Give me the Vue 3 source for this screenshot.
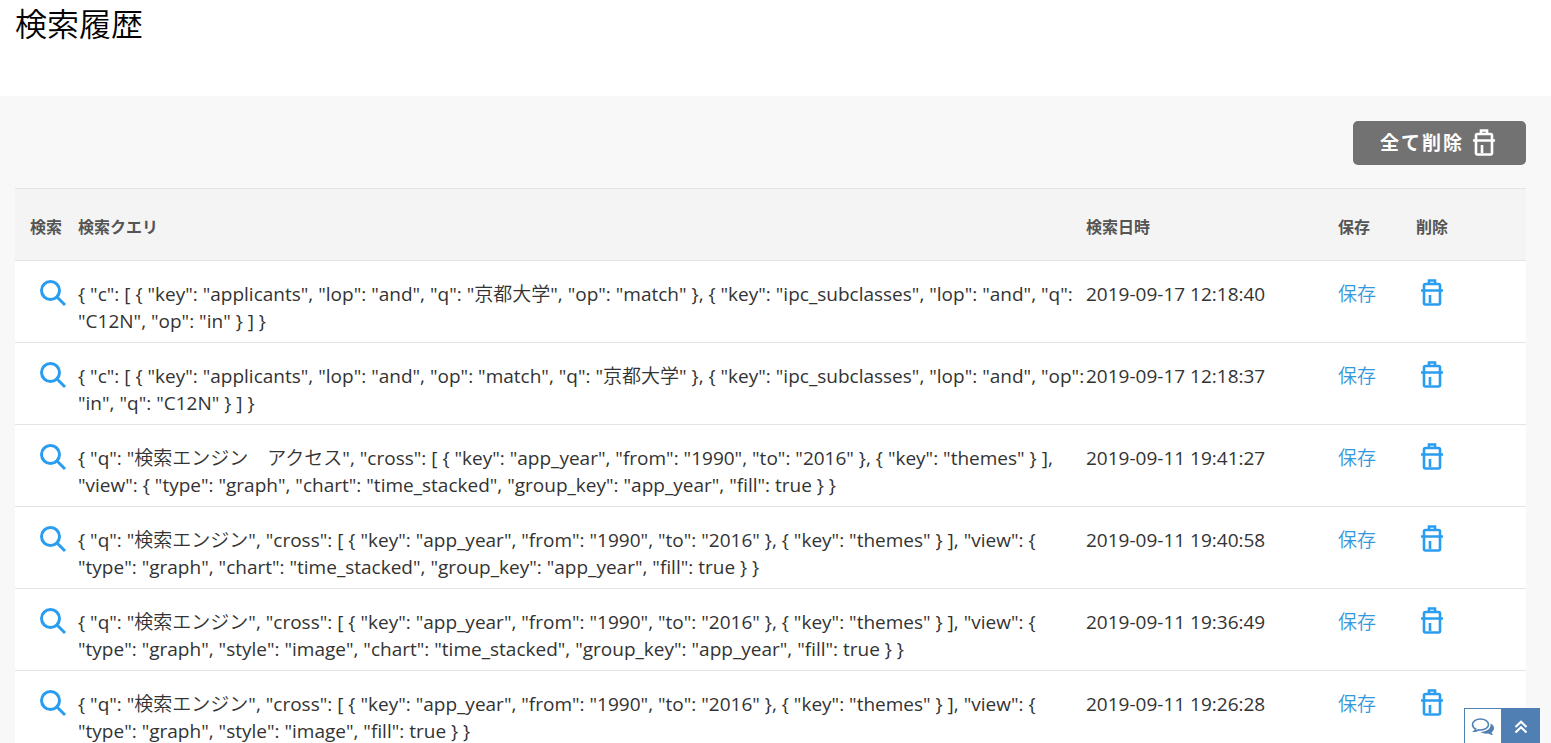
<script setup>
const rows = [
  { query: '{ "c": [ { "key": "applicants", "lop": "and", "q": "京都大学", "op": "match" }, { "key": "ipc_subclasses", "lop": "and", "q": "C12N", "op": "in" } ] }', date: '2019-09-17 12:18:40' },
  { query: '{ "c": [ { "key": "applicants", "lop": "and", "op": "match", "q": "京都大学" }, { "key": "ipc_subclasses", "lop": "and", "op": "in", "q": "C12N" } ] }', date: '2019-09-17 12:18:37' },
  { query: '{ "q": "検索エンジン　アクセス", "cross": [ { "key": "app_year", "from": "1990", "to": "2016" }, { "key": "themes" } ], "view": { "type": "graph", "chart": "time_stacked", "group_key": "app_year", "fill": true } }', date: '2019-09-11 19:41:27' },
  { query: '{ "q": "検索エンジン", "cross": [ { "key": "app_year", "from": "1990", "to": "2016" }, { "key": "themes" } ], "view": { "type": "graph", "chart": "time_stacked", "group_key": "app_year", "fill": true } }', date: '2019-09-11 19:40:58' },
  { query: '{ "q": "検索エンジン", "cross": [ { "key": "app_year", "from": "1990", "to": "2016" }, { "key": "themes" } ], "view": { "type": "graph", "style": "image", "chart": "time_stacked", "group_key": "app_year", "fill": true } }', date: '2019-09-11 19:36:49' },
  { query: '{ "q": "検索エンジン", "cross": [ { "key": "app_year", "from": "1990", "to": "2016" }, { "key": "themes" } ], "view": { "type": "graph", "style": "image", "fill": true } }', date: '2019-09-11 19:26:28' },
]
</script>

<template>
  <div class="page">
    <header class="head">
      <h1>検索履歴</h1>
    </header>
    <main class="body">
      <div class="toolbar">
        <button type="button" class="clear">
          <span>全て削除</span>
          <svg class="trash" viewBox="0 0 24 28" aria-hidden="true">
            <path d="M9 5V1.500h6V5M4 11V6.500q0-1.500 1.500-1.500h13q1.500 0 1.500 1.500V11M1 11.500h22M4 11.500V24q0 1.500 1.500 1.500h13q1.500 0 1.500-1.500V11.500M10 16v8" />
          </svg>
        </button>
      </div>
      <table class="history">
        <colgroup>
          <col class="c-search" />
          <col />
          <col class="c-date" />
          <col class="c-save" />
          <col class="c-delete" />
        </colgroup>
        <thead>
          <tr>
            <th scope="col">検索</th>
            <th scope="col">検索クエリ</th>
            <th scope="col">検索日時</th>
            <th scope="col">保存</th>
            <th scope="col">削除</th>
          </tr>
        </thead>
        <tbody>
          <tr v-for="row in rows" :key="row.date">
            <td class="search">
              <a href="#" aria-label="検索">
                <svg class="lens" viewBox="0 0 28 28" aria-hidden="true">
                  <circle cx="11.500" cy="11.500" r="9" />
                  <path d="M18 18l8 8" />
                </svg>
              </a>
            </td>
            <td>{{ row.query }}</td>
            <td>{{ row.date }}</td>
            <td><a href="#">保存</a></td>
            <td class="delete">
              <button type="button" class="icon" aria-label="削除">
                <svg class="trash" viewBox="0 0 24 28" aria-hidden="true">
                  <path d="M9 5V1.500h6V5M4 11V6.500q0-1.500 1.500-1.500h13q1.500 0 1.500 1.500V11M1 11.500h22M4 11.500V24q0 1.500 1.500 1.500h13q1.500 0 1.500-1.500V11.500M10 16v8" />
                </svg>
              </button>
            </td>
          </tr>
        </tbody>
      </table>
    </main>
    <div class="float">
      <button type="button" class="chat" aria-label="チャット">
        <svg viewBox="0 0 24 20" aria-hidden="true">
          <path class="fill" d="M19.500 6.500c2.300 1.100 3.500 2.800 3.500 4.700 0 1.700-.9 3.200-2.500 4.200.3 1 .9 1.800 1.800 2.400-1.900.2-3.500-.3-4.800-1.300-2.800.4-5.800-.1-7.800-1.500 5.600-.2 10.800-3.200 9.800-8.500z" />
          <path class="line" d="M9.500 2C5 2 1.500 4.400 1.500 7.500c0 1.900 1.200 3.500 3.200 4.500-.2.900-.7 1.600-1.500 2.300 1.700 0 3.100-.5 4.200-1.500.7.100 1.400.2 2.100.2 4.500 0 8-2.400 8-5.500S14 2 9.500 2z" />
        </svg>
      </button>
      <button type="button" class="top" aria-label="トップへ戻る">
        <svg viewBox="0 0 14 14" aria-hidden="true">
          <path d="M1.500 7L7 1.700 12.500 7M1.500 12.500L7 7.200l5.500 5.300" />
        </svg>
      </button>
    </div>
  </div>
</template>

<style>
html {
  height: 100%;
  overflow: hidden;
}
body {
  height: 100%;
  margin: 0;
  overflow: auto;
  scrollbar-width: none;
  background: #f8f8f8;
}
</style>

<style scoped>
.page {
  font-family: "Open Sans", "Noto Sans CJK JP DemiLight", "Noto Sans CJK JP", sans-serif;
  font-size: 19px;
  line-height: 27px;
  color: #333;
}
.head {
  background: #fff;
  padding: 0 15px 48px;
}
h1 {
  margin: 0;
  font-size: 32px;
  line-height: 48px;
  font-weight: 400;
  color: #000;
}
.body {
  padding: 25px 25px 40px 15px;
}
.toolbar {
  display: flex;
  justify-content: flex-end;
  margin-bottom: 23px;
}
button {
  font: inherit;
  border: 0;
  padding: 0;
  cursor: pointer;
}
.clear {
  display: flex;
  align-items: center;
  gap: 8px;
  height: 44px;
  padding: 0 30px 0 27px;
  border-radius: 5px;
  background: #727272;
  color: #fff;
  font-family: "Open Sans", "Noto Sans CJK JP", sans-serif;
  font-size: 19px;
  font-weight: 700;
  letter-spacing: 2px;
}
svg {
  display: block;
  fill: none;
  stroke: currentColor;
  stroke-width: 3;
}
.trash {
  width: 24px;
  height: 28px;
  stroke-width: 2.6;
}
.history {
  width: 100%;
  table-layout: fixed;
  border-collapse: collapse;
  background: #fff;
}
.c-search {
  width: 63px;
}
.c-date {
  width: 252px;
}
.c-save {
  width: 78px;
}
.c-delete {
  width: 110px;
}
tr {
  border-top: 1px solid #e3e3e3;
}
th {
  height: 72px;
  padding: 6px 0 0;
  box-sizing: border-box;
  background: #f4f4f4;
  color: #555;
  font-family: "Open Sans", "Noto Sans CJK JP", sans-serif;
  font-size: 16px;
  font-weight: 700;
  text-align: left;
  white-space: nowrap;
}
th:first-child {
  padding-left: 15px;
}
td {
  padding: 20px 0 7px;
  vertical-align: top;
}
a {
  color: #3498db;
  text-decoration: none;
}
.search {
  padding: 18px 0 0 24px;
}
.lens {
  width: 28px;
  height: 28px;
  color: #2a9df0;
}
.delete {
  padding: 18px 0 0 4px;
}
.icon {
  background: none;
  color: #2a9df0;
}
.float {
  position: fixed;
  right: 11px;
  bottom: -3px;
  display: flex;
}
.chat,
.top {
  display: flex;
  align-items: center;
  justify-content: center;
  width: 38px;
  height: 38px;
  box-sizing: border-box;
  border: 1px solid #4f7fb3;
  color: #4f7fb3;
  background: #fff;
}
.top {
  color: #fff;
  background: #4f7fb3;
}
.chat svg {
  width: 24px;
  height: 20px;
}
.fill {
  fill: currentColor;
  stroke: none;
}
.line {
  fill: #fff;
  stroke-width: 1.6;
}
.top svg {
  width: 14px;
  height: 14px;
  stroke-width: 2.2;
}
</style>
